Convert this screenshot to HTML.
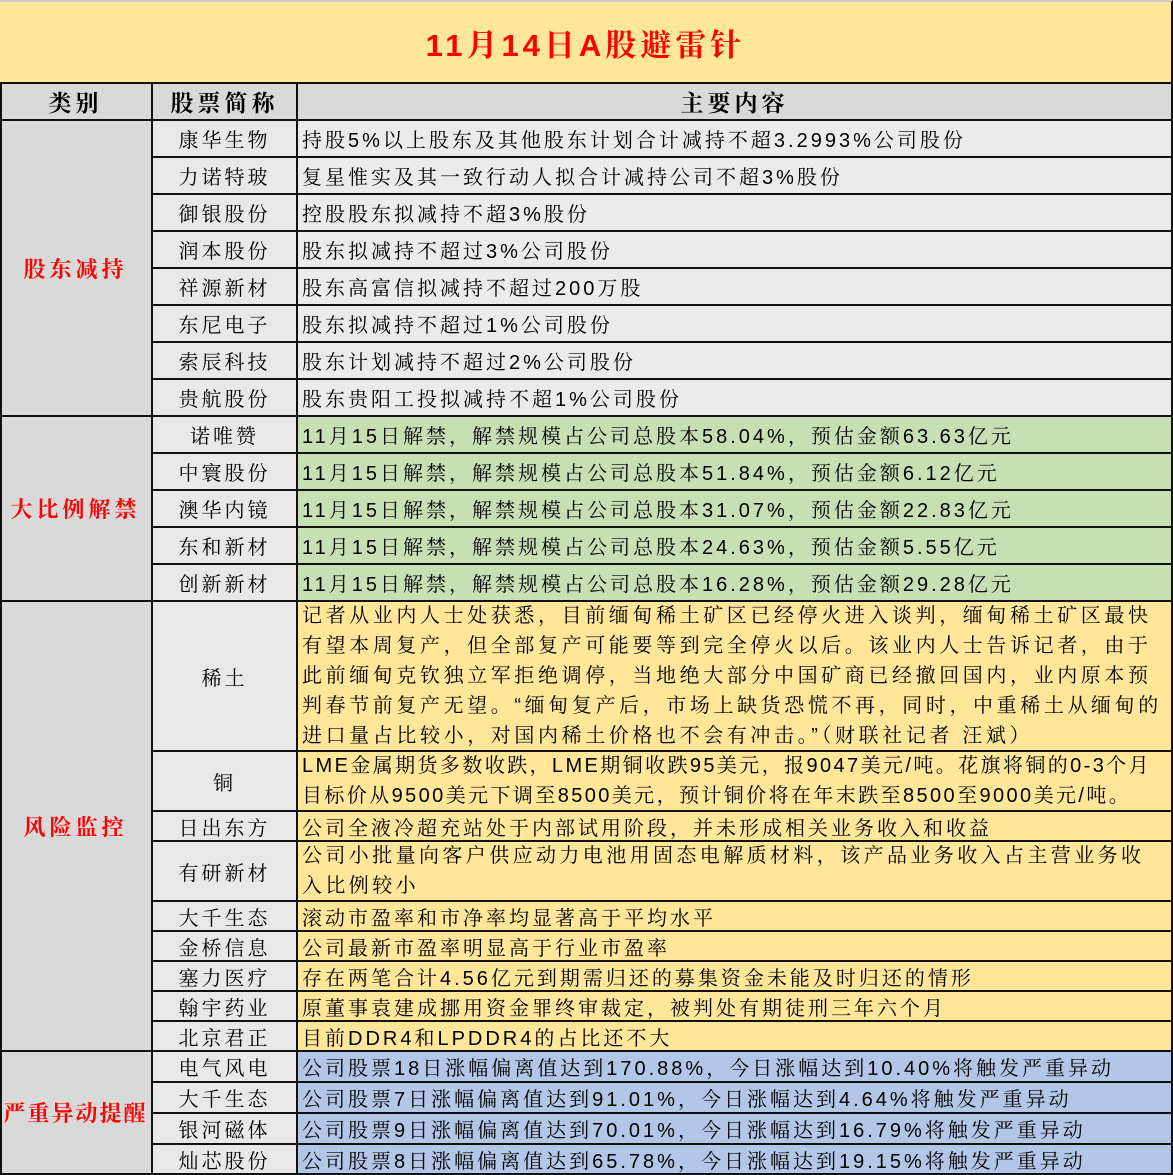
<!DOCTYPE html>
<html><head><meta charset="utf-8">
<style>
*{margin:0;padding:0;box-sizing:border-box}
body{width:1173px;height:1175px;background:#fff;position:relative;overflow:hidden;
font-family:"Liberation Sans","Noto Serif CJK SC","Noto Sans CJK SC",serif;color:#000}
.c{position:absolute;border-right:2px solid #111;border-bottom:2px solid #111;display:flex;align-items:center;font-size:20px;letter-spacing:3px;white-space:nowrap}
.n{justify-content:center;background:#e8e8e8}
.k{justify-content:center;background:#d9d9d9;color:#f00;font-weight:bold;font-size:22px;letter-spacing:4px}
.t{padding-left:4px;background:#ebebeb}
.g{background:#c6e0b4}
.y{background:#ffe699}
.b{background:#b4c6e7}
.m{white-space:normal;line-height:30px;padding-right:4px}
.h{background:#d9d9d9;justify-content:center;font-weight:bold;font-size:23px;letter-spacing:4px}
</style></head><body>
<div class="c" style="left:0;top:0;width:1173px;height:84px;background:#ffe699;justify-content:center;color:#f00;font-weight:bold;font-size:31px;letter-spacing:4px;border-top:2px solid #ccc">11月14日A股避雷针</div>
<div style="position:absolute;left:0;top:82px;width:2px;height:1093px;background:#111;z-index:5"></div>

<div class="c h" style="left:0;top:84px;width:153px;height:37px">类别</div>
<div class="c h" style="left:153px;top:84px;width:145px;height:37px">股票简称</div>
<div class="c h" style="left:298px;top:84px;width:875px;height:37px">主要内容</div>

<div class="c k" style="left:0;top:121px;width:153px;height:296px">股东减持</div>
<div class="c n" style="left:153px;top:121px;width:145px;height:37px">康华生物</div>
<div class="c t" style="left:298px;top:121px;width:875px;height:37px">持股5%以上股东及其他股东计划合计减持不超3.2993%公司股份</div>
<div class="c n" style="left:153px;top:158px;width:145px;height:37px">力诺特玻</div>
<div class="c t" style="left:298px;top:158px;width:875px;height:37px">复星惟实及其一致行动人拟合计减持公司不超3%股份</div>
<div class="c n" style="left:153px;top:195px;width:145px;height:37px">御银股份</div>
<div class="c t" style="left:298px;top:195px;width:875px;height:37px">控股股东拟减持不超3%股份</div>
<div class="c n" style="left:153px;top:232px;width:145px;height:37px">润本股份</div>
<div class="c t" style="left:298px;top:232px;width:875px;height:37px">股东拟减持不超过3%公司股份</div>
<div class="c n" style="left:153px;top:269px;width:145px;height:37px">祥源新材</div>
<div class="c t" style="left:298px;top:269px;width:875px;height:37px">股东高富信拟减持不超过200万股</div>
<div class="c n" style="left:153px;top:306px;width:145px;height:37px">东尼电子</div>
<div class="c t" style="left:298px;top:306px;width:875px;height:37px">股东拟减持不超过1%公司股份</div>
<div class="c n" style="left:153px;top:343px;width:145px;height:37px">索辰科技</div>
<div class="c t" style="left:298px;top:343px;width:875px;height:37px">股东计划减持不超过2%公司股份</div>
<div class="c n" style="left:153px;top:380px;width:145px;height:37px">贵航股份</div>
<div class="c t" style="left:298px;top:380px;width:875px;height:37px">股东贵阳工投拟减持不超1%公司股份</div>

<div class="c k" style="left:0;top:417px;width:153px;height:185px">大比例解禁</div>
<div class="c n" style="left:153px;top:417px;width:145px;height:37px">诺唯赞</div>
<div class="c t g" style="left:298px;top:417px;width:875px;height:37px">11月15日解禁，解禁规模占公司总股本58.04%，预估金额63.63亿元</div>
<div class="c n" style="left:153px;top:454px;width:145px;height:37px">中寰股份</div>
<div class="c t g" style="left:298px;top:454px;width:875px;height:37px">11月15日解禁，解禁规模占公司总股本51.84%，预估金额6.12亿元</div>
<div class="c n" style="left:153px;top:491px;width:145px;height:37px">澳华内镜</div>
<div class="c t g" style="left:298px;top:491px;width:875px;height:37px">11月15日解禁，解禁规模占公司总股本31.07%，预估金额22.83亿元</div>
<div class="c n" style="left:153px;top:528px;width:145px;height:37px">东和新材</div>
<div class="c t g" style="left:298px;top:528px;width:875px;height:37px">11月15日解禁，解禁规模占公司总股本24.63%，预估金额5.55亿元</div>
<div class="c n" style="left:153px;top:565px;width:145px;height:37px">创新新材</div>
<div class="c t g" style="left:298px;top:565px;width:875px;height:37px">11月15日解禁，解禁规模占公司总股本16.28%，预估金额29.28亿元</div>

<div class="c k" style="left:0;top:602px;width:153px;height:450px">风险监控</div>
<div class="c n" style="left:153px;top:602px;width:145px;height:150px">稀土</div>
<div class="c t y m" style="left:298px;top:602px;width:875px;height:150px;letter-spacing:3.6px">记者从业内人士处获悉，目前缅甸稀土矿区已经停火进入谈判，缅甸稀土矿区最快有望本周复产，但全部复产可能要等到完全停火以后。该业内人士告诉记者，由于此前缅甸克钦独立军拒绝调停，当地绝大部分中国矿商已经撤回国内，业内原本预判春节前复产无望。“缅甸复产后，市场上缺货恐慌不再，同时，中重稀土从缅甸的进口量占比较小，对国内稀土价格也不会有冲击。”（财联社记者 汪斌）</div>
<div class="c n" style="left:153px;top:752px;width:145px;height:60px">铜</div>
<div class="c t y m" style="left:298px;top:752px;width:875px;height:60px;letter-spacing:2.4px">LME金属期货多数收跌，LME期铜收跌95美元，报9047美元/吨。花旗将铜的0-3个月目标价从9500美元下调至8500美元，预计铜价将在年末跌至8500至9000美元/吨。</div>
<div class="c n" style="left:153px;top:812px;width:145px;height:30px">日出东方</div>
<div class="c t y" style="left:298px;top:812px;width:875px;height:30px">公司全液冷超充站处于内部试用阶段，并未形成相关业务收入和收益</div>
<div class="c n" style="left:153px;top:842px;width:145px;height:60px">有研新材</div>
<div class="c t y m" style="left:298px;top:842px;width:875px;height:60px;letter-spacing:3.4px">公司小批量向客户供应动力电池用固态电解质材料，该产品业务收入占主营业务收入比例较小</div>
<div class="c n" style="left:153px;top:902px;width:145px;height:30px">大千生态</div>
<div class="c t y" style="left:298px;top:902px;width:875px;height:30px">滚动市盈率和市净率均显著高于平均水平</div>
<div class="c n" style="left:153px;top:932px;width:145px;height:30px">金桥信息</div>
<div class="c t y" style="left:298px;top:932px;width:875px;height:30px">公司最新市盈率明显高于行业市盈率</div>
<div class="c n" style="left:153px;top:962px;width:145px;height:30px">塞力医疗</div>
<div class="c t y" style="left:298px;top:962px;width:875px;height:30px">存在两笔合计4.56亿元到期需归还的募集资金未能及时归还的情形</div>
<div class="c n" style="left:153px;top:992px;width:145px;height:30px">翰宇药业</div>
<div class="c t y" style="left:298px;top:992px;width:875px;height:30px">原董事袁建成挪用资金罪终审裁定，被判处有期徒刑三年六个月</div>
<div class="c n" style="left:153px;top:1022px;width:145px;height:30px">北京君正</div>
<div class="c t y" style="left:298px;top:1022px;width:875px;height:30px">目前DDR4和LPDDR4的占比还不大</div>

<div class="c k" style="left:0;top:1052px;width:153px;height:123px;letter-spacing:2px">严重异动提醒</div>
<div class="c n" style="left:153px;top:1052px;width:145px;height:31px">电气风电</div>
<div class="c t b" style="left:298px;top:1052px;width:875px;height:31px">公司股票18日涨幅偏离值达到170.88%，今日涨幅达到10.40%将触发严重异动</div>
<div class="c n" style="left:153px;top:1083px;width:145px;height:31px">大千生态</div>
<div class="c t b" style="left:298px;top:1083px;width:875px;height:31px">公司股票7日涨幅偏离值达到91.01%，今日涨幅达到4.64%将触发严重异动</div>
<div class="c n" style="left:153px;top:1114px;width:145px;height:31px">银河磁体</div>
<div class="c t b" style="left:298px;top:1114px;width:875px;height:31px">公司股票9日涨幅偏离值达到70.01%，今日涨幅达到16.79%将触发严重异动</div>
<div class="c n" style="left:153px;top:1145px;width:145px;height:30px">灿芯股份</div>
<div class="c t b" style="left:298px;top:1145px;width:875px;height:30px">公司股票8日涨幅偏离值达到65.78%，今日涨幅达到19.15%将触发严重异动</div>
</body></html>
